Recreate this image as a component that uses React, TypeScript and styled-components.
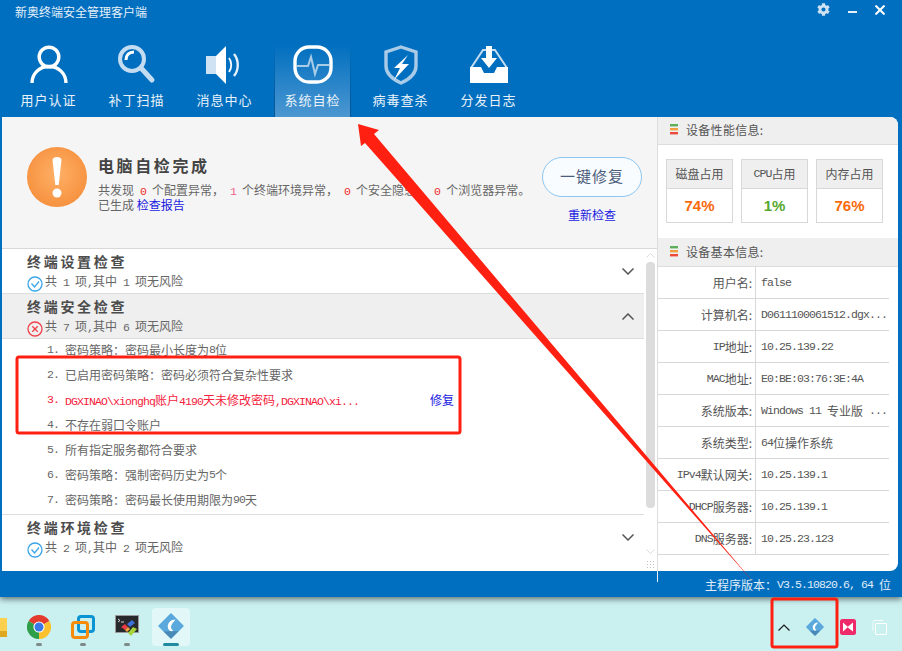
import React from "react";
import styled, { createGlobalStyle } from "styled-components";
import { FaCog } from "react-icons/fa";

const GlobalStyle = createGlobalStyle`
    html, body {
        margin: 0;
        padding: 0;
        background: #caf0f0;
    }
    * {
        box-sizing: border-box;
    }
`;

const BLUE = "#016fbf";
const CJK = `"Noto Sans CJK SC", "Liberation Sans", sans-serif`;

// half-width latin, same 6px advance as the cjk text's ascii
const Lat = styled.span`
    font-family: "Liberation Mono", monospace;
    font-size: 11.5px;
    letter-spacing: -0.9px;
`;

const UserIcon = () => (
    <svg width="40" height="40" viewBox="0 0 40 40" fill="none" stroke="#fff" strokeWidth="3.4">
        <circle cx="20" cy="12" r="9.8" />
        <path d="M3 38c0-9 7-16.500 17-16.500S37 29 37 38" />
    </svg>
);

const SearchIcon = () => (
    <svg width="40" height="40" viewBox="0 0 40 40" fill="none">
        <circle cx="15" cy="14" r="12" stroke="#c4dcf1" strokeWidth="4" />
        <path d="M9 15c0-5 3-8 8-8" stroke="#fff" strokeWidth="3" />
        <path d="M24 23l11 12" stroke="#c4dcf1" strokeWidth="5" strokeLinecap="round" />
    </svg>
);

const SpeakerIcon = () => (
    <svg width="40" height="40" viewBox="0 0 40 40" fill="none">
        <rect x="1" y="11" width="10" height="18" fill="#cfe2f3" />
        <path d="M11 11L21 1v38L11 29z" fill="#fff" />
        <path d="M24 13c3 4 3 10 0 14" stroke="#fff" strokeWidth="1.800" />
        <path d="M29 9c5 6 5 16 0 22" stroke="#e6f0f9" strokeWidth="2.400" />
    </svg>
);

const MonitorIcon = () => (
    <svg width="40" height="40" viewBox="0 0 40 40" fill="none">
        <rect x="2" y="2" width="36" height="35" rx="14" stroke="#fff" strokeWidth="3.400" />
        <path d="M4 21h11l3-9 4 17 3-9h11" stroke="#a9cde9" strokeWidth="2" />
    </svg>
);

const ShieldIcon = () => (
    <svg width="40" height="40" viewBox="0 0 40 40" fill="none">
        <path d="M20 2l15 5v14c0 8-6 13-15 17C11 34 5 29 5 21V7z" stroke="#a9cbe8" strokeWidth="3.400" />
        <path d="M27 10L13 23h6l-6 12 15-16h-7z" fill="#fff" />
    </svg>
);

const TrayIcon = () => (
    <svg width="40" height="40" viewBox="0 0 40 40" fill="none">
        <path d="M2 23L14 5h3M38 23L26 5h-3" stroke="#c4dcf1" strokeWidth="2" />
        <path d="M1 22h11l3 6h10l3-6h11v16H1z" fill="#fff" />
        <path d="M17 1h6v12h5l-8 10-8-10h5z" fill="#fff" />
    </svg>
);

const WarningDisc = () => (
    <svg width="60" height="60" viewBox="0 0 60 60">
        <defs>
            <radialGradient id="disc" cx="50%" cy="45%" r="60%">
                <stop offset="0%" stopColor="#ffb066" />
                <stop offset="100%" stopColor="#f58f3c" />
            </radialGradient>
        </defs>
        <circle cx="30" cy="30" r="30" fill="url(#disc)" />
        <path d="M25.500 13c0-4 9-4 9 0l-2.800 25h-3.400z" fill="#fff" />
        <circle cx="30" cy="46" r="4.500" fill="#fff" />
    </svg>
);

const CheckBadge = () => (
    <svg width="16" height="16" viewBox="0 0 16 16" fill="none" stroke="#3aa5e8" strokeWidth="1.300">
        <circle cx="8" cy="8" r="7" />
        <path d="M4.500 7.500L7.500 11l4.500-5.500" />
    </svg>
);

const CrossBadge = () => (
    <svg width="16" height="16" viewBox="0 0 16 16" fill="none" stroke="#f0404a" strokeWidth="1.300">
        <circle cx="8" cy="8" r="7" />
        <path d="M5.300 5.300l5.400 5.400M10.700 5.300l-5.400 5.400" />
    </svg>
);

const Chevron = ({ up }: { up?: boolean }) => (
    <svg width="12" height="7" viewBox="0 0 12 7" fill="none" stroke="#555" strokeWidth="1.500">
        <path d={up ? "M.5 6.500L6 1l5.500 5.500" : "M.5.5L6 6 11.500.5"} />
    </svg>
);

const BarsIcon = () => (
    <svg width="9" height="11" viewBox="0 0 9 11">
        <rect width="8" height="2.400" fill="#5fae5a" />
        <rect y="4" width="8" height="2.400" fill="#f0a040" />
        <rect y="8" width="8" height="2.400" fill="#ea4b3a" />
    </svg>
);

const ChromeIcon = () => (
    <svg width="24" height="24" viewBox="0 0 24 24">
        <path d="M12 12L1.600 6A12 12 0 0 1 22.400 6z" fill="#e33b2e" />
        <path d="M12 12L22.400 6A12 12 0 0 1 12 24z" fill="#fbc02d" />
        <path d="M12 12V24A12 12 0 0 1 1.600 6z" fill="#2e9e48" />
        <circle cx="12" cy="12" r="5.600" fill="#fff" />
        <circle cx="12" cy="12" r="4.500" fill="#3b78e7" />
    </svg>
);

const VmIcon = () => (
    <svg width="24" height="24" viewBox="0 0 24 24" fill="none" strokeWidth="3">
        <rect x="7.500" y="1.500" width="15" height="15" rx="2.500" stroke="#0b94d4" />
        <rect x="1.500" y="7.500" width="15" height="15" rx="2.500" stroke="#f58a0b" />
    </svg>
);

const ConsoleIcon = () => (
    <svg width="24" height="24" viewBox="0 0 24 24">
        <rect width="24" height="18" fill="#9a9a9a" />
        <rect x="1" y="1" width="22" height="16" fill="#26282c" />
        <path d="M3 4l2 1.500L3 7" stroke="#fff" strokeWidth=".8" fill="none" />
        <path d="M6 7h3" stroke="#fff" strokeWidth=".8" />
        <path d="M6 12l4-3 3 3-3 3z" fill="#e83a44" />
        <path d="M12 9l5-4 3 3-5 4z" fill="#3c70d8" />
        <path d="M10 15l3-3 2 2-3 3z" fill="#f2a33a" />
        <path d="M13 18l5-6 4 2-6 7z" fill="#a6d33a" />
    </svg>
);

const DiamondApp = ({ size }: { size: number }) => (
    <svg width={size} height={size} viewBox="0 0 24 24">
        <path d="M12 1l11 11-11 11L1 12z" fill="#5aa8dc" stroke="#5aa8dc" strokeWidth="1.500" strokeLinejoin="round" />
        <path d="M5 17l7 6.500 7-7-14 .5z" fill="#3b6f96" opacity=".55" />
        <path d="M16 6c-4 0-7 3-7 6.500S12 18 14 16c-2-1-2.500-3-1.500-5 .8-2 2.500-3 3.500-5z" fill="#fff" />
    </svg>
);

const PinkApp = () => (
    <svg width="16" height="16" viewBox="0 0 16 16">
        <rect width="16" height="16" rx="2.500" fill="#ee2a6b" />
        <path d="M3 3.500L8 8l-5 4.500zM13 3.500v9L9 9.500 7.500 8z" fill="#fff" />
    </svg>
);

const CopyIcon = () => (
    <svg width="15" height="15" viewBox="0 0 15 15" fill="none" stroke="#fff" strokeWidth="1">
        <path d="M1 11V2.500Q1 .5 3 .5h8" opacity=".8" />
        <rect x="3.500" y="3.500" width="11" height="11" rx=".5" />
    </svg>
);

const App = () => {
    const tabs = [
        { label: "用户认证", icon: <UserIcon /> },
        { label: "补丁扫描", icon: <SearchIcon /> },
        { label: "消息中心", icon: <SpeakerIcon /> },
        { label: "系统自检", icon: <MonitorIcon />, active: true },
        { label: "病毒查杀", icon: <ShieldIcon /> },
        { label: "分发日志", icon: <TrayIcon /> },
    ];

    const deviceRows: [React.ReactNode, React.ReactNode][] = [
        ["用户名:", <Lat>false</Lat>],
        ["计算机名:", <Lat>D0611100061512.dgx...</Lat>],
        [<><Lat>IP</Lat>地址:</>, <Lat>10.25.139.22</Lat>],
        [<><Lat>MAC</Lat>地址:</>, <Lat>E0:BE:03:76:3E:4A</Lat>],
        ["系统版本:", <><Lat>Windows 11 </Lat>专业版<Lat> ...</Lat></>],
        ["系统类型:", <><Lat>64</Lat>位操作系统</>],
        [<><Lat>IPv4</Lat>默认网关:</>, <Lat>10.25.139.1</Lat>],
        [<><Lat>DHCP</Lat>服务器:</>, <Lat>10.25.139.1</Lat>],
        [<><Lat>DNS</Lat>服务器:</>, <Lat>10.25.23.123</Lat>],
    ];

    return (
        <Page>
            <GlobalStyle />
            <Window>
                <TitleBar>
                    <AppTitle>新奥终端安全管理客户端</AppTitle>
                    <WindowButtons>
                        <FaCog size={13} color="#cfe2f3" />
                        <MinimizeBar />
                        <svg width="10" height="10" viewBox="0 0 10 10" stroke="#fff" strokeWidth="2">
                            <path d="M.5.5l9 9M9.500.5l-9 9" />
                        </svg>
                    </WindowButtons>
                </TitleBar>

                <TabBar>
                    {tabs.map((tab) => (
                        <Tab key={tab.label} $active={tab.active}>
                            {tab.icon}
                            <TabLabel>{tab.label}</TabLabel>
                        </Tab>
                    ))}
                </TabBar>

                <Content>
                    <LeftPane>
                        <Summary>
                            <WarningDisc />
                            <SummaryText>
                                <SummaryTitle>电脑自检完成</SummaryTitle>
                                <SummaryLine>
                                    共发现<Count>0</Count>个配置异常，<Count $pink>1</Count>个终端环境异常，
                                    <Count>0</Count>个安全隐患，<Count>0</Count>个浏览器异常。
                                </SummaryLine>
                                <SummaryLine>
                                    已生成 <BlueLink>检查报告</BlueLink>
                                </SummaryLine>
                            </SummaryText>
                            <SummaryActions>
                                <FixAllButton>一键修复</FixAllButton>
                                <BlueLink>重新检查</BlueLink>
                            </SummaryActions>
                        </Summary>

                        <ListArea>
                            <List>
                                <SectionHead>
                                    <SectionText>
                                        <SectionTitle>终端设置检查</SectionTitle>
                                        <SectionSub>
                                            <CheckBadge />
                                            <SubText>共<Lat> 1 </Lat>项<Lat>,</Lat>其中<Lat> 1 </Lat>项无风险</SubText>
                                        </SectionSub>
                                    </SectionText>
                                    <Chevron />
                                </SectionHead>

                                <SectionHead $open>
                                    <SectionText>
                                        <SectionTitle>终端安全检查</SectionTitle>
                                        <SectionSub>
                                            <CrossBadge />
                                            <SubText>共<Lat> 7 </Lat>项<Lat>,</Lat>其中<Lat> 6 </Lat>项无风险</SubText>
                                        </SectionSub>
                                    </SectionText>
                                    <Chevron up />
                                </SectionHead>

                                <Items>
                                    <Item><ItemNo>1.</ItemNo>密码策略：密码最小长度为<Lat>8</Lat>位</Item>
                                    <Item><ItemNo>2.</ItemNo>已启用密码策略：密码必须符合复杂性要求</Item>
                                    <Item $danger>
                                        <ItemNo>3.</ItemNo>
                                        <ItemBody>
                                            <Lat>DGXINAO\xionghq</Lat>账户<Lat>4190</Lat>天未修改密码<Lat>,DGXINAO\xi...</Lat>
                                        </ItemBody>
                                        <BlueLink>修复</BlueLink>
                                    </Item>
                                    <Item><ItemNo>4.</ItemNo>不存在弱口令账户</Item>
                                    <Item><ItemNo>5.</ItemNo>所有指定服务都符合要求</Item>
                                    <Item><ItemNo>6.</ItemNo>密码策略：强制密码历史为<Lat>5</Lat>个</Item>
                                    <Item><ItemNo>7.</ItemNo>密码策略：密码最长使用期限为<Lat>90</Lat>天</Item>
                                </Items>

                                <SectionHead>
                                    <SectionText>
                                        <SectionTitle>终端环境检查</SectionTitle>
                                        <SectionSub>
                                            <CheckBadge />
                                            <SubText>共<Lat> 2 </Lat>项<Lat>,</Lat>其中<Lat> 2 </Lat>项无风险</SubText>
                                        </SectionSub>
                                    </SectionText>
                                    <Chevron />
                                </SectionHead>
                            </List>
                            <Scrollbar>
                                <ScrollArrow>
                                    <svg width="9" height="5" viewBox="0 0 9 5" fill="none" stroke="#ddd">
                                        <path d="M.5 4.500l4-4 4 4" />
                                    </svg>
                                </ScrollArrow>
                                <ScrollThumb />
                                <ScrollArrow>
                                    <svg width="9" height="5" viewBox="0 0 9 5" fill="none" stroke="#ddd">
                                        <path d="M.5.5l4 4 4-4" />
                                    </svg>
                                </ScrollArrow>
                                <ResizeGrip />
                            </Scrollbar>
                        </ListArea>
                    </LeftPane>

                    <RightPane>
                        <PaneHead $first>
                            <BarsIcon />
                            设备性能信息:
                        </PaneHead>
                        <Cards>
                            <Card>
                                <CardHead>磁盘占用</CardHead>
                                <CardValue $color="#f96a0a">74%</CardValue>
                            </Card>
                            <Card>
                                <CardHead><Lat>CPU</Lat>占用</CardHead>
                                <CardValue $color="#55a82c">1%</CardValue>
                            </Card>
                            <Card>
                                <CardHead>内存占用</CardHead>
                                <CardValue $color="#f96a0a">76%</CardValue>
                            </Card>
                        </Cards>
                        <PaneHead>
                            <BarsIcon />
                            设备基本信息:
                        </PaneHead>
                        <InfoTable>
                            {deviceRows.map(([label, value], i) => (
                                <InfoRow key={i}>
                                    <InfoLabel>{label}</InfoLabel>
                                    <InfoValue>{value}</InfoValue>
                                </InfoRow>
                            ))}
                        </InfoTable>
                    </RightPane>
                </Content>

                <StatusBar>
                    主程序版本：<Lat>V3.5.10820.6, 64 </Lat>位
                </StatusBar>
            </Window>

            <Taskbar>
                <TaskLeft>
                    <FolderStub />
                    <TaskItem><ChromeIcon /><RunDot /></TaskItem>
                    <TaskItem><VmIcon /><RunDot /></TaskItem>
                    <TaskItem><ConsoleIcon /><RunDot /></TaskItem>
                    <ActiveTask><DiamondApp size={26} /><ActiveBar /></ActiveTask>
                </TaskLeft>
                <Tray>
                    <svg width="12" height="7" viewBox="0 0 12 7" fill="none" stroke="#1a1a1a" strokeWidth="1.200">
                        <path d="M.5 6.500L6 1l5.500 5.500" />
                    </svg>
                    <DiamondApp size={18} />
                    <PinkApp />
                    <CopyIcon />
                </Tray>
            </Taskbar>

            <Annotations width="902" height="651" viewBox="0 0 902 651">
                <rect x="17" y="357" width="443" height="76" rx="2" fill="none" stroke="#ff2012" strokeWidth="3" />
                <rect x="772" y="599" width="65" height="48" rx="2" fill="none" stroke="#ff2012" strokeWidth="3" />
                <polygon points="358,124 379,130 374,134 755,584 365,143 361,146" fill="#ff2012" />
            </Annotations>
        </Page>
    );
};

const Page = styled.div`
    position: relative;
    width: 902px;
    height: 651px;
    overflow: hidden;
    display: flex;
    flex-direction: column;
    background: #caf0f0;
    font-family: ${CJK};
    font-size: 12px;
    color: #555;
`;

const Window = styled.div`
    position: relative;
    z-index: 1;
    height: 597px;
    background: ${BLUE};
    display: flex;
    flex-direction: column;
    box-shadow: 0 2px 6px rgba(0, 0, 0, 0.55);
`;

const TitleBar = styled.div`
    height: 45px;
    display: flex;
    justify-content: space-between;
    align-items: flex-start;
    padding: 4px 17px 0 15px;
`;

const AppTitle = styled.div`
    line-height: 16px;
    color: #e6f0f9;
`;

const WindowButtons = styled.div`
    display: flex;
    align-items: center;
    gap: 18px;
    height: 11px;
`;

const MinimizeBar = styled.div`
    width: 9px;
    height: 2px;
    margin-top: 4px;
    background: #e6f0f9;
`;

const TabBar = styled.div`
    height: 72px;
    display: flex;
    gap: 11px;
    padding-left: 10px;
`;

const Tab = styled.div<{ $active?: boolean }>`
    width: 77px;
    display: flex;
    flex-direction: column;
    align-items: center;
    color: #e9f2fa;
    background: ${(p) => (p.$active ? "linear-gradient(#016fbf 0%, #4c97d1 100%)" : "none")};
    border-style: solid;
    border-width: 0 1px;
    border-image: ${(p) => (p.$active ? "linear-gradient(#016fbf, #0a5590) 1" : "none")};
    border-color: transparent;
`;

const TabLabel = styled.div`
    margin-top: 6px;
    line-height: 18px;
    font-size: 13px;
    letter-spacing: 1px;
`;

const Content = styled.div`
    height: 454px;
    margin: 0 4px 0 2px;
    display: flex;
    background: #fff;
    border-radius: 0 8px 8px 0;
    overflow: hidden;
`;

const LeftPane = styled.div`
    width: 656px;
    display: flex;
    flex-direction: column;
    border-right: 1px solid #ddd;
`;

const Summary = styled.div`
    height: 132px;
    flex: none;
    display: flex;
    align-items: flex-start;
    padding: 30px 15px 0 25px;
    background: #f5f5f5;
    border-bottom: 1px solid #d8d8d8;
`;

const SummaryText = styled.div`
    flex: 1;
    margin: 8px 0 0 11px;
    line-height: 15px;
    color: #666;
`;

const SummaryTitle = styled.div`
    height: 20px;
    margin-bottom: 7px;
    font-size: 16px;
    font-weight: 700;
    line-height: 20px;
    letter-spacing: 2.6px;
    color: #444;
`;

const SummaryLine = styled.div`
    height: 15px;
    white-space: nowrap;
`;

const Count = styled.span<{ $pink?: boolean }>`
    margin: 0 6px;
    font-family: "Liberation Mono", monospace;
    font-size: 11.5px;
    letter-spacing: -0.9px;
    color: ${(p) => (p.$pink ? "#f0608a" : "#f02a2a")};
`;

const BlueLink = styled.span`
    color: #1a1ae0;
`;

const SummaryActions = styled.div`
    width: 100px;
    margin-top: 10px;
    display: flex;
    flex-direction: column;
    align-items: center;
    gap: 9px;
`;

const FixAllButton = styled.div`
    width: 100px;
    height: 40px;
    display: flex;
    align-items: center;
    justify-content: center;
    padding-bottom: 3px;
    border: 1px solid #8cc6f2;
    border-radius: 20px;
    background: #f9fcff;
    font-size: 15px;
    letter-spacing: 1px;
    color: #4c5c7c;
`;

const ListArea = styled.div`
    flex: 1;
    display: flex;
    min-height: 0;
`;

const List = styled.div`
    width: 642px;
`;

const SectionHead = styled.div<{ $open?: boolean }>`
    height: 45px;
    display: flex;
    align-items: center;
    justify-content: space-between;
    padding: 0 10px 0 25px;
    background: ${(p) => (p.$open ? "#efefef" : "#fff")};
    border-bottom: 1px solid #ddd;

    &:last-child {
        border-bottom: none;
    }
`;

const SectionText = styled.div`
    height: 45px;
    padding-top: 3px;
`;

const SectionTitle = styled.div`
    height: 19px;
    margin-bottom: 2px;
    font-size: 14px;
    font-weight: 700;
    line-height: 18px;
    letter-spacing: 2.7px;
    color: #4c4c4c;
`;

const SectionSub = styled.div`
    display: flex;
    align-items: center;
    gap: 2px;
    line-height: 16px;
    color: #666;
`;

const SubText = styled.span`
    padding-bottom: 4px;
    white-space: pre;
`;

const Items = styled.div`
    border-bottom: 1px solid #ddd;
`;

const Item = styled.div<{ $danger?: boolean }>`
    height: 25px;
    display: flex;
    align-items: center;
    padding: 0 190px 4px 45px;
    color: ${(p) => (p.$danger ? "#f5213c" : "#666")};
`;

const ItemNo = styled.span`
    width: 18px;
    font-family: "Liberation Mono", monospace;
    font-size: 11.5px;
    letter-spacing: -0.9px;
`;

const ItemBody = styled.span`
    flex: 1;
    white-space: nowrap;
`;

const Scrollbar = styled.div`
    width: 13px;
    display: flex;
    flex-direction: column;
    align-items: center;
    padding-right: 1px;
`;

const ScrollArrow = styled.div`
    height: 13px;
    display: flex;
    align-items: center;
    justify-content: center;
`;

const ScrollThumb = styled.div`
    width: 9px;
    height: 246px;
    margin-bottom: 37px;
    border-radius: 4px;
    background: #dcdcdc;
`;

const ResizeGrip = styled.div`
    width: 9px;
    height: 9px;
    margin-top: 2px;
    background: radial-gradient(#c4c4c4 0.7px, transparent 0.8px) 0 0 / 3px 3px;
`;

const RightPane = styled.div`
    flex: 1;
    display: flex;
    flex-direction: column;
    color: #555;
`;

const PaneHead = styled.div<{ $first?: boolean }>`
    height: ${(p) => (p.$first ? "28px" : "29px")};
    flex: none;
    display: flex;
    align-items: center;
    gap: 7px;
    padding: 0 0 2px 12px;
    letter-spacing: 0.3px;
    background: #efefef;
    border-bottom: 1px solid #ddd;
`;

const Cards = styled.div`
    height: 93px;
    flex: none;
    display: flex;
    gap: 8px;
    padding: 14px 0 0 8px;
`;

const Card = styled.div`
    width: 67px;
    height: 64px;
    display: flex;
    flex-direction: column;
    border: 1px solid #d8d8d8;
`;

const CardHead = styled.div`
    height: 29px;
    display: flex;
    align-items: center;
    justify-content: center;
    padding-bottom: 2px;
    background: #efefef;
    border-bottom: 1px solid #d8d8d8;
`;

const CardValue = styled.div<{ $color: string }>`
    flex: 1;
    display: flex;
    align-items: center;
    justify-content: center;
    font-family: "Liberation Sans", sans-serif;
    font-size: 15px;
    font-weight: 700;
    color: ${(p) => p.$color};
`;

const InfoTable = styled.div`
    width: 231px;
`;

const InfoRow = styled.div`
    height: 32px;
    display: grid;
    grid-template-columns: 98px 1fr;
    border-bottom: 1px solid #d8d8d8;
`;

const InfoLabel = styled.div`
    display: flex;
    align-items: center;
    justify-content: flex-end;
    padding: 0 3px 1px 0;
    white-space: pre;
    border-right: 1px solid #d8d8d8;
`;

const InfoValue = styled.div`
    display: flex;
    align-items: center;
    padding: 0 0 1px 5px;
    white-space: pre;
`;

const StatusBar = styled.div`
    position: relative;
    flex: 1;
    display: flex;
    align-items: center;
    justify-content: flex-end;
    padding: 0 11px 0 0;
    white-space: pre;
    color: #e0edf8;

    /* small white tick under the pane divider */
    &::before {
        content: "";
        position: absolute;
        left: 657px;
        top: 0;
        width: 1px;
        height: 11px;
        background: #e8f2fa;
    }
`;

const Taskbar = styled.div`
    flex: 1;
    display: flex;
    justify-content: space-between;
    align-items: center;
    padding: 6px 15px 0 0;
`;

const TaskLeft = styled.div`
    display: flex;
    align-items: center;
`;

const FolderStub = styled.div`
    width: 7px;
    height: 19px;
    margin-right: 20px;
    background: linear-gradient(#fbd04e 70%, #e0a820 70%);
`;

const TaskItem = styled.div`
    position: relative;
    width: 24px;
    height: 24px;
    margin-right: 20px;
`;

const RunDot = styled.div`
    position: absolute;
    left: 9px;
    bottom: -7px;
    width: 6px;
    height: 3px;
    border-radius: 2px;
    background: #7d8a8a;
`;

const ActiveTask = styled.div`
    position: relative;
    width: 38px;
    height: 38px;
    margin-left: -7px;
    display: flex;
    align-items: center;
    justify-content: center;
    padding-bottom: 2px;
    border-radius: 4px;
    background: #e2f8f8;
`;

const ActiveBar = styled.div`
    position: absolute;
    left: 11px;
    bottom: 0;
    width: 16px;
    height: 3px;
    border-radius: 2px;
    background: #1f8aa0;
`;

const Tray = styled.div`
    display: flex;
    align-items: center;
    gap: 16px;
`;

const Annotations = styled.svg`
    position: absolute;
    z-index: 2;
    top: 0;
    left: 0;
    pointer-events: none;
`;

export default App;
